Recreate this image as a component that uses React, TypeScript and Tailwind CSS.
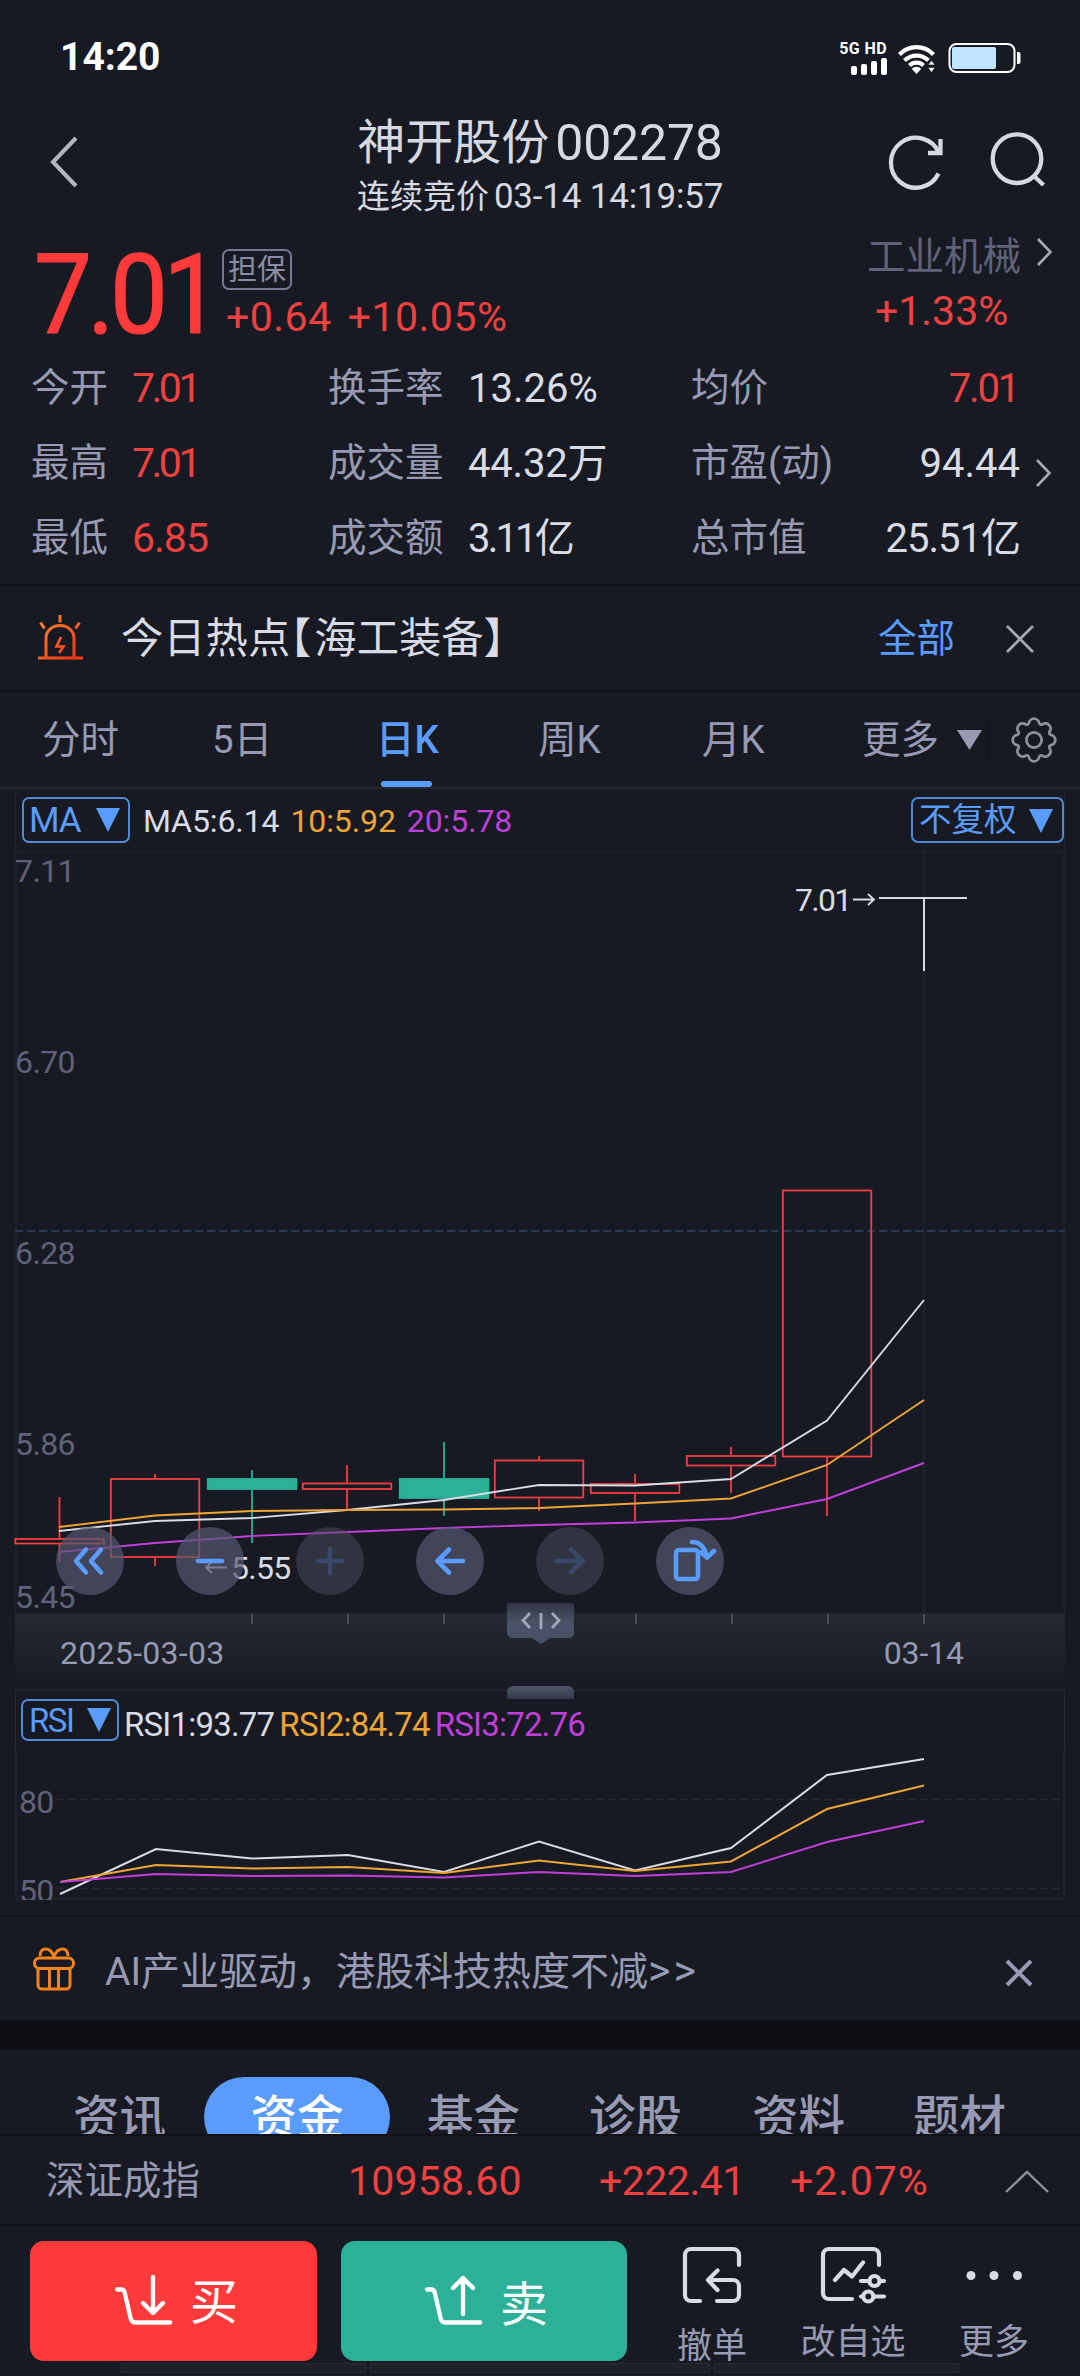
import React from 'react';

type Candle = { x: number; top: number; bottom: number; high: number; low: number; up: boolean };

const CANDLES: Candle[] = [
    { x: 59.5, top: 1540, bottom: 1544.5, high: 1498, low: 1563, up: true },
    { x: 155, top: 1480, bottom: 1558, high: 1475, low: 1567, up: true },
    { x: 252, top: 1480, bottom: 1490, high: 1471, low: 1544, up: false },
    { x: 347, top: 1484.5, bottom: 1490, high: 1466, low: 1511, up: true },
    { x: 444, top: 1480, bottom: 1499, high: 1443, low: 1517, up: false },
    { x: 539, top: 1461.5, bottom: 1498.5, high: 1457, low: 1512, up: true },
    { x: 635, top: 1485, bottom: 1494, high: 1475, low: 1522, up: true },
    { x: 731, top: 1457, bottom: 1466.5, high: 1448, low: 1494, up: true },
    { x: 827, top: 1191.5, bottom: 1457.5, high: 1191.5, low: 1517, up: true },
];

const MA_LINES = [
    { color: '#c03fd8', points: '59,1553 155,1544 252,1537 347,1533 444,1529 539,1526 635,1523.5 731,1519.5 827,1500 924,1464' },
    { color: '#d9dbe5', points: '59,1532 155,1522 252,1519 347,1511 444,1501 539,1486 635,1486.5 731,1480 827,1421.5 924,1301' },
    { color: '#efa534', points: '59,1528 155,1516.5 252,1512 347,1511 444,1510.5 539,1509 635,1504.5 731,1499.5 827,1466 924,1401' },
];

const RSI_LINES = [
    { color: '#d9dbe5', points: '60,1895 156,1850 252,1859.5 348,1856 444,1873 539,1842.5 635,1871.5 731,1849 827,1776 924,1760' },
    { color: '#efa534', points: '60,1883 156,1866 252,1869.5 348,1868 444,1874 539,1861.5 635,1872 731,1862.5 827,1810 924,1786.5' },
    { color: '#c03fd8', points: '60,1883 156,1875 252,1877 348,1876.5 444,1878.5 539,1873 635,1877 731,1873 827,1843 924,1822' },
];

const PRICE_LABELS = [
    { text: '7.11', y: 883 },
    { text: '6.70', y: 1073.5 },
    { text: '6.28', y: 1265 },
    { text: '5.86', y: 1455.5 },
    { text: '5.45', y: 1609 },
];

// eight round teeth joined by small hollows
const polar = (deg: number) => {
    const a = (deg * Math.PI) / 180;
    return `${(17.6 * Math.cos(a)).toFixed(2)} ${(17.6 * Math.sin(a)).toFixed(2)}`;
};
const GEAR_PATH =
    `M${polar(-17)}` +
    [0, 45, 90, 135, 180, 225, 270, 315].map((t) => `A5.200 5.200 0 0 1 ${polar(t + 17)}A2.200 2.200 0 0 0 ${polar(t + 28)}`).join('') +
    'Z';

function StatusBar() {
    return (
        <div className="flex h-[115px] items-center pl-[60px]">
            <span className="w-[778px] text-[39px] font-bold text-white">14:20</span>
            <div className="flex w-[49px] flex-col items-end">
                <span className="whitespace-nowrap text-[16px] leading-[16px] font-bold tracking-[0.4px] text-white">5G HD</span>
                <div className="flex h-[18px] items-end gap-[4px] pt-[1px]">
                    <i className="h-[9px] w-[6px] rounded-[2px] bg-white" />
                    <i className="h-[11px] w-[6px] rounded-[2px] bg-white" />
                    <i className="h-[14px] w-[6px] rounded-[2px] bg-white" />
                    <i className="h-[17px] w-[6px] rounded-[2px] bg-white" />
                </div>
            </div>
            <svg className="ml-[10px]" width="40" height="32" viewBox="0 0 40 32" fill="none" stroke="#fff" strokeWidth="4.2">
                <path d="M2.5 12.5a23.5 23.5 0 0 1 34 0" />
                <path d="M7.5 18.5a17 17 0 0 1 24 0" />
                <path d="M12.5 23.5a10 10 0 0 1 14 0" />
                <path d="M14.8 27a6 6 0 0 1 9.400 0l-4.700 5z" fill="#fff" stroke="none" />
                <path d="M31 23l3.500-4.500L38 23zM31 25.500l3.500 5 3.500-5z" fill="#fff" stroke="#171a22" strokeWidth="0.6" />
            </svg>
            <svg className="ml-[11px]" width="74" height="32" viewBox="0 0 74 32">
                <rect x="1.5" y="2" width="65" height="28" rx="7" fill="none" stroke="#fff" strokeWidth="2" />
                <rect x="4" y="5" width="44" height="22" rx="2" fill="#c2e4ff" />
                <path d="M69 10h1.500a2 2 0 0 1 2 2v8a2 2 0 0 1-2 2H69z" fill="#fff" />
            </svg>
        </div>
    );
}

function Header() {
    return (
        <header className="flex h-[110px] items-start text-[#d6d8e2]">
            <svg className="mt-[21px] ml-[48px]" width="32" height="52" viewBox="0 0 32 52" fill="none" stroke="#b4b6bf" strokeWidth="4">
                <path d="M28 2L5 26l23 24" />
            </svg>
            <div className="ml-[220px] flex w-[480px] flex-col items-center whitespace-nowrap">
                <h1 className="mt-[4px] flex h-[48px] items-center gap-[6px] leading-none">
                    <span className="text-[48px]">神开股份</span>
                    <span className="text-[50px] tracking-[-0.2px]">002278</span>
                </h1>
                <p className="mt-[11px] flex h-[36px] items-center gap-[5px] leading-none">
                    <span className="text-[33px]">连续竞价</span>
                    <span className="text-[35px] tracking-[-0.2px]">03-14 14:19:57</span>
                </p>
            </div>
            <svg className="mt-[15px] ml-[102px]" width="68" height="64" viewBox="882 130 68 64" fill="none" stroke="#d6d8e2" strokeWidth="4.300">
                <path d="M938.500 173.500A25 25 0 1 1 939 153" />
                <path d="M928 153h12.500v-14" />
            </svg>
            <svg className="mt-[15px] ml-[34px]" width="68" height="64" viewBox="984 130 68 64" fill="none" stroke="#d6d8e2" strokeWidth="4.300">
                <circle cx="1017" cy="158.700" r="24.300" />
                <path d="M1034.500 176.500l9 8.500" />
            </svg>
        </header>
    );
}

function Chevron() {
    return (
        <svg width="16" height="28" viewBox="0 0 16 28" fill="none" stroke="#a5a7b3" strokeWidth="2.6">
            <path d="M1 1l12.500 13L1 27" />
        </svg>
    );
}

type Cell = { label: string; value: string; className: string };

function QuoteRow({ cells }: { cells: Cell[] }) {
    const [a, b, c] = cells;
    return (
        <div className="flex h-[75px] items-center pt-[2px] whitespace-nowrap text-[38.5px] leading-none text-[#989ab3]">
            <span className="w-[101px]">{a.label}</span>
            <span className={`w-[196px] text-[41px] ${a.className}`}>{a.value}</span>
            <span className="w-[140px]">{b.label}</span>
            <span className={`w-[223px] text-[40px] ${b.className}`}>{b.value}</span>
            <span className="w-[158px]">{c.label}</span>
            <span className={`w-[171px] text-right text-[40px] ${c.className}`}>{c.value}</span>
        </div>
    );
}

const QUOTE_ROWS: Cell[][] = [
    [
        { label: '今开', value: '7.01', className: 'tracking-[-3.500px] text-[#f04040]' },
        { label: '换手率', value: '13.26%', className: 'text-[#d9dbe5]' },
        { label: '均价', value: '7.01', className: 'pr-[2px] tracking-[-2.200px] text-[#f04040]' },
    ],
    [
        { label: '最高', value: '7.01', className: 'tracking-[-3.500px] text-[#f04040]' },
        { label: '成交量', value: '44.32万', className: 'tracking-[-0.200px] text-[#d9dbe5]' },
        { label: '市盈(动)', value: '94.44', className: 'text-[#d9dbe5]' },
    ],
    [
        { label: '最低', value: '6.85', className: 'tracking-[-1px] text-[#f04040]' },
        { label: '成交额', value: '3.11亿', className: 'tracking-[-2.800px] text-[#d9dbe5]' },
        { label: '总市值', value: '25.51亿', className: 'tracking-[-1px] text-[#d9dbe5]' },
    ],
];

function Quote() {
    return (
        <section className="h-[361px] border-b-2 border-[#101218] pl-[31px]">
            <div className="flex h-[125px] leading-none whitespace-nowrap">
                <span className="mt-[14px] ml-[3px] w-[188px] origin-left scale-x-[0.92] text-[112px] tracking-[-5px] text-[#ff3a3a] [-webkit-text-stroke:1.200px_#ff3a3a]">7.01</span>
                <div className="w-[500px]">
                    <span className="mt-[24px] flex h-[41px] w-[70px] items-center justify-center rounded-[7px] border-2 border-[#767891] pt-[2px] text-[29px] text-[#8b8da6]">担保</span>
                    <div className="mt-[7px] ml-[4px] flex gap-[16px] text-[41px] tracking-[0.500px] text-[#f04040]">
                        <span>+0.64</span>
                        <span>+10.05%</span>
                    </div>
                </div>
                <div className="ml-[145px] w-[170px]">
                    <p className="mt-[13px] text-[38.5px] text-[#606279]">工业机械</p>
                    <p className="mt-[14px] ml-[8px] text-[41px] text-[#f04040]">+1.33%</p>
                </div>
                <div className="mt-[13px]">
                    <Chevron />
                </div>
            </div>
            <div className="flex items-center">
                <div>
                    {QUOTE_ROWS.map((cells) => (
                        <QuoteRow key={cells[0].label} cells={cells} />
                    ))}
                </div>
                <div className="mt-[20px] ml-[16px]">
                    <Chevron />
                </div>
            </div>
        </section>
    );
}

function HotBar() {
    return (
        <section className="flex h-[106px] items-center border-b-2 border-[#101218] leading-none whitespace-nowrap">
            <svg className="ml-[36px]" width="48" height="50" viewBox="36 612 48 50" fill="none" stroke="url(#siren)" strokeWidth="3">
                <defs>
                    <linearGradient id="siren" gradientUnits="userSpaceOnUse" x1="36" y1="614" x2="84" y2="662">
                        <stop offset="0.2" stopColor="#ff7a2b" />
                        <stop offset="0.8" stopColor="#fb3a16" />
                    </linearGradient>
                </defs>
                <path d="M46 656v-19a14 12.500 0 0 1 28 0v19M38 657h45M60 614v7.500M40.500 621.500l4 6M79.500 621.500l-4 6" />
                <path d="M61 636l-4.500 9.500h7L59 652" strokeWidth="2.600" />
            </svg>
            <p className="mt-[3px] ml-[37px] w-[757px] text-[42.300px] text-[#d9dbe5] [font-feature-settings:'halt']">
                今日热点<span className="mr-[3px]">【</span>海工装备】
            </p>
            <span className="mt-[3px] w-[126px] text-[38.500px] text-[#5a9cfb]">全部</span>
            <svg className="mt-[2px]" width="32" height="32" viewBox="0 0 32 32" stroke="#a5a7b3" strokeWidth="2.800">
                <path d="M3 3l26 26M29 3L3 29" />
            </svg>
        </section>
    );
}

function PeriodTabs() {
    return (
        <nav className="flex h-[97px] border-b-2 border-[#262932] text-[38.500px] leading-[95px] whitespace-nowrap text-[#989ab3]">
            <span className="ml-[42px] w-[170px]">分时</span>
            <span className="w-[164px]">5日</span>
            <span className="relative w-[162px] font-medium text-[#5a9cfb]">
                日K
                <i className="absolute bottom-0 left-[5px] h-[6px] w-[51px] rounded-[3px] bg-[#5a9cfb]" />
            </span>
            <span className="w-[164px]">周K</span>
            <span className="w-[160px]">月K</span>
            <span className="w-[95px]">更多</span>
            <svg className="mt-[38px]" width="25" height="20" viewBox="0 0 25 20" fill="#989ab3">
                <path d="M0 0h25L12.500 20z" />
            </svg>
            <i className="mt-[27px] ml-[5px] h-[44px] w-[2px] bg-[#12141a]" />
            <svg className="mt-[22px] ml-[19px]" width="52" height="52" viewBox="-26 -26 52 52" fill="none" stroke="#8d909e" strokeWidth="2.800">
                <path d={GEAR_PATH} />
                <circle r="7.600" />
            </svg>
        </nav>
    );
}

function PickerButton({ label, className }: { label: string; className: string }) {
    return (
        <button className={`flex items-center justify-between rounded-[7px] border-2 border-[#5288d8] text-[#5a9cfb] ${className}`}>
            {label}
            <svg width="24" height="24" viewBox="0 0 24 24" fill="#5a9cfb">
                <path d="M0 0h24L12 24z" />
            </svg>
        </button>
    );
}

function MaBar() {
    return (
        <div className="mx-[15px] flex h-[62px] items-start border-x border-[#20232c] text-[32px] leading-none whitespace-nowrap">
            <PickerButton label="MA" className="mt-[8px] ml-[6px] h-[46px] w-[108px] pr-[8px] pl-[5px] text-[35px] tracking-[-1px]" />
            <div className="mt-[16px] ml-[13px] flex w-[768px] gap-[11px] tracking-[-0.100px]">
                <span className="text-[#d9dbe5]">MA5:6.14</span>
                <span className="text-[#efa534]">10:5.92</span>
                <span className="text-[#c03fd8]">20:5.78</span>
            </div>
            <PickerButton label="不复权" className="mt-[8px] h-[46px] w-[153px] pt-[1px] pr-[9px] pl-[6px] text-[32.500px]" />
        </div>
    );
}

function RoundButton({ dim, children }: { dim?: boolean; children: React.ReactNode }) {
    return (
        <button className={`size-[68px] rounded-full ${dim ? 'bg-[#4a4d60]/50' : 'bg-[#555970]/70'}`}>
            <svg width="68" height="68" viewBox="0 0 68 68" fill="none" stroke={dim ? '#3a4968' : '#5a9cfb'} strokeWidth="4.600" strokeLinecap="round" strokeLinejoin="round">
                {children}
            </svg>
        </button>
    );
}

function KLineChart() {
    return (
        <div className="relative h-[763px]">
            <svg className="block" width="1080" height="763" viewBox="0 852 1080 763" fill="none">
                <path d="M15 852.500H1065M924 852V1614M1064 852V1614M16 852V1614M15 1614H1065" stroke="#1e212b" strokeWidth="2" />
                <path d="M15 1232H1065" stroke="#2b3852" strokeWidth="2" strokeDasharray="8 4" />
                {PRICE_LABELS.map((l) => (
                    <text key={l.y} x="15" y={l.y} fontSize="32" letterSpacing="-0.600" fill="#606279">{l.text}</text>
                ))}
                {CANDLES.map((c) => (
                    <g key={c.x} stroke={c.up ? '#f23f3f' : '#2cb097'} strokeWidth="1.800">
                        <path d={c.up ? `M${c.x} ${c.high}V${c.top}M${c.x} ${c.bottom}V${c.low}` : `M${c.x} ${c.high}V${c.low}`} />
                        <rect x={c.x - 44.2} y={c.top} width="88.500" height={c.bottom - c.top} fill={c.up ? 'none' : '#2cb097'} />
                    </g>
                ))}
                {MA_LINES.map((l) => (
                    <polyline key={l.color} points={l.points} stroke={l.color} strokeWidth="1.900" />
                ))}
                <path d="M879 899H967M924 899V972" stroke="#d9dbe5" strokeWidth="2" />
                <path d="M853 900.500H873M868 895l6 5.500-6 5.500" stroke="#d9dbe5" strokeWidth="1.800" />
                <text x="795" y="912" fontSize="32" letterSpacing="-1.700" fill="#d9dbe5">7.01</text>
                <path d="M227 1568.500H207M212 1563l-6 5.500 6 5.500" stroke="#d9dbe5" strokeWidth="1.800" />
                <text x="231" y="1580" fontSize="32" letterSpacing="-0.700" fill="#d9dbe5">5.55</text>
            </svg>
            {/* floating chart controls */}
            <div className="absolute top-[676px] left-[56px] flex gap-[52px]">
                <RoundButton><path d="M30 22.500L20 34l10 11.500M45 22.500L35 34l10 11.500" /></RoundButton>
                <RoundButton><path d="M22 34h24" /></RoundButton>
                <RoundButton dim><path d="M22 34h24M34 22v24" /></RoundButton>
                <RoundButton><path d="M22 34h25M33 22.500L21.500 34 33 45.500" /></RoundButton>
                <RoundButton dim><path d="M20 34h27M35 22.500L46.500 34 35 45.500" /></RoundButton>
                <RoundButton>
                    <rect x="20" y="23" width="22" height="29" rx="3" />
                    <path d="M36 15c8 0 13 6 15 15M58 24l-7 6.500-6-5" />
                </RoundButton>
            </div>
        </div>
    );
}

function DateAxis() {
    return (
        <div className="relative mx-[15px] h-[76px] bg-gradient-to-b from-[#252932] to-[#171a22] text-[32px] leading-none text-[#989ab3]">
            <svg className="block" width="1050" height="10" viewBox="15 1615 1050 10" stroke="#4a4d5c" strokeWidth="2">
                <path d="M252 1615v10M348 1615v10M444 1615v10M636 1615v10M732 1615v10M828 1615v10M924 1615v10" />
            </svg>
            <div className="mt-[13px] flex justify-between pr-[101px] pl-[45px]">
                <span className="tracking-[0.300px]">2025-03-03</span>
                <span className="tracking-[-0.100px]">03-14</span>
            </div>
            <svg className="absolute -top-[12px] left-[491px]" width="70" height="42" viewBox="506 1603 70 42" fill="none">
                <path d="M507 1604h67v30a5 5 0 0 1-5 5h-19l-9 6-9-6h-20a5 5 0 0 1-5-5z" fill="url(#grip)" />
                <path d="M530 1614l-7 7.500 7 7.500M552 1614l7 7.500-7 7.500M541 1614v16" stroke="#a3a6b8" strokeWidth="2.800" />
                <defs>
                    <linearGradient id="grip" x1="0" y1="0" x2="0" y2="1">
                        <stop offset="0" stopColor="#2f3545" />
                        <stop offset="0.45" stopColor="#4a5266" />
                        <stop offset="1" stopColor="#475066" />
                    </linearGradient>
                </defs>
            </svg>
            <i className="absolute top-[72px] left-[492px] h-[13px] w-[67px] rounded-t-[6px] bg-gradient-to-b from-[#4d556a] to-[#333a4b]" />
        </div>
    );
}

function RsiPanel() {
    return (
        <section className="h-[227px] border-b-2 border-[#101218]">
            <div className="mx-[15px] flex h-[61px] items-start border-x border-t border-[#262932] text-[33px] leading-none whitespace-nowrap">
                <PickerButton label="RSI" className="mt-[8px] ml-[5px] h-[42px] w-[98px] pr-[6px] pl-[6px] text-[33px] tracking-[-1.500px]" />
                <div className="mt-[17px] ml-[5px] flex gap-[5px] tracking-[-0.800px]">
                    <span className="text-[#d9dbe5]">RSI1:93.77</span>
                    <span className="text-[#efa534]">RSI2:84.74</span>
                    <span className="text-[#c03fd8]">RSI3:72.76</span>
                </div>
            </div>
            <svg className="block" width="1080" height="149" viewBox="0 1752 1080 149" fill="none">
                <path d="M16 1752V1900H1064V1752" stroke="#20232d" strokeWidth="2" />
                <path d="M56 1800.500H1064M56 1889.500H1064" stroke="#262936" strokeWidth="1.500" strokeDasharray="8 4" />
                <text x="19" y="1813.500" fontSize="32" letterSpacing="-0.800" fill="#606279">80</text>
                <text x="19" y="1902.500" fontSize="32" letterSpacing="-0.800" fill="#606279">50</text>
                {RSI_LINES.map((l) => (
                    <polyline key={l.color} points={l.points} stroke={l.color} strokeWidth="2" />
                ))}
            </svg>
        </section>
    );
}

function Banner() {
    return (
        <section className="flex h-[103px] items-center leading-none whitespace-nowrap text-[#989ab3]">
            <svg className="ml-[32px]" width="44" height="46" viewBox="32 1946 44 46" fill="none" stroke="#f5831c" strokeWidth="3">
                <rect x="34.500" y="1958" width="39" height="10.500" rx="5" />
                <path d="M38 1969v16a4 4 0 0 0 4 4h24a4 4 0 0 0 4-4v-16M49.500 1969v20M58.500 1969v20" />
                <path d="M54 1957c-3-10-14-11-14-1M54 1957c3-10 14-11 14-1" />
            </svg>
            <p className="mt-[3px] ml-[29px] w-[899px] text-[39px]">
                AI产业驱动，港股科技热度不减<span className="text-[43px] tracking-[3px]">&gt;&gt;</span>
            </p>
            <svg className="mt-[9px]" width="30" height="30" viewBox="0 0 30 30" stroke="#989ab3" strokeWidth="4">
                <path d="M3 3l24 24M27 3L3 27" />
            </svg>
        </section>
    );
}

function InfoTabs() {
    return (
        <nav className="flex h-[84px] items-start overflow-hidden pt-[27px] text-[46.500px] leading-[82px] font-medium whitespace-nowrap text-[#989ab3]">
            <span className="ml-[73px] w-[131px]">资讯</span>
            <span className="h-[80px] w-[186px] shrink-0 rounded-full bg-[#5a9cfb] text-center text-white">资金</span>
            <span className="ml-[37px] w-[162px]">基金</span>
            <span className="w-[163px]">诊股</span>
            <span className="w-[161px]">资料</span>
            <span>题材</span>
        </nav>
    );
}

function IndexBar() {
    return (
        <div className="flex h-[92px] items-center border-y-2 border-[#101218] pt-[3px] text-[41px] leading-none whitespace-nowrap text-[#f04040]">
            <span className="ml-[46px] w-[302px] text-[38.500px] text-[#989ab3]">深证成指</span>
            <span className="w-[251px] tracking-[0.200px]">10958.60</span>
            <span className="w-[191px] tracking-[-0.500px]">+222.41</span>
            <span className="w-[215px] tracking-[0.900px]">+2.07%</span>
            <svg width="44" height="24" viewBox="0 0 44 24" fill="none" stroke="#8f919c" strokeWidth="2.400">
                <path d="M1 22L22 2l21 20" />
            </svg>
        </div>
    );
}

function TradeBar() {
    return (
        <footer className="h-[149px] leading-none whitespace-nowrap">
            <div className="flex h-[137px] items-start pt-[15px] pl-[30px]">
                <button className="flex h-[120px] w-[287px] items-center rounded-[14px] bg-[#ff3a3a] pl-[84px] text-[48px] text-white">
                    <svg width="60" height="54" viewBox="0 0 60 54" fill="none" stroke="#fff" strokeWidth="4.300" strokeLinecap="round" strokeLinejoin="round">
                        <path d="M3 15.500h4.500c2 0 2.700 1 3.200 3l6 26c.6 2.500 2 4 4.500 4h35M39 3v36M29 29l10 10 10-10" />
                    </svg>
                    <span className="mt-[3px] ml-[16px]">买</span>
                </button>
                <button className="ml-[24px] flex h-[120px] w-[286px] items-center rounded-[14px] bg-[#2cb097] pl-[83px] text-[48px] text-white">
                    <svg width="60" height="54" viewBox="0 0 60 54" fill="none" stroke="#fff" strokeWidth="4.300" strokeLinecap="round" strokeLinejoin="round">
                        <path d="M3 15.500h4.500c2 0 2.700 1 3.200 3l6 26c.6 2.500 2 4 4.500 4h35M39 40V4M29 14L39 4l10 10" />
                    </svg>
                    <span className="mt-[7px] ml-[16px]">卖</span>
                </button>
                <div className="ml-[46px] flex w-[78px] flex-col items-center text-[35px] text-[#989ab3]">
                    <svg className="mt-[4px]" width="64" height="62" viewBox="680 2246 64 62" fill="none" stroke="#d9dbe5" strokeWidth="4.200" strokeLinecap="round" strokeLinejoin="round">
                        <path d="M739 2266v-10a6 6 0 0 0-6-6h-42a6 6 0 0 0-6 6v40a6 6 0 0 0 6 6h9M717 2302h16a6 6 0 0 0 6-6v-9a6 6 0 0 0-6-6h-25M717.500 2271.500L708 2281l9.500 10" />
                    </svg>
                    <span className="mt-[22px]">撤单</span>
                </div>
                <div className="ml-[46px] flex w-[112px] flex-col items-center text-[35px] text-[#989ab3]">
                    <svg className="mt-[4px]" width="68" height="62" viewBox="819 2246 68 62" fill="none" stroke="#d9dbe5" strokeWidth="4.200" strokeLinecap="round" strokeLinejoin="round">
                        <path d="M879 2266v-10a6 6 0 0 0-6-6h-44a6 6 0 0 0-6 6v38a6 6 0 0 0 6 6h23M835 2281l9-10 8 6.500L863 2263.500" />
                        <path d="M861 2282h8M880 2282h4M861 2297.500h2M874 2297.500h10" />
                        <circle cx="874.500" cy="2282" r="5" />
                        <circle cx="868.300" cy="2297.500" r="5" />
                    </svg>
                    <span className="mt-[18px]">改自选</span>
                </div>
                <div className="ml-[46px] flex w-[78px] flex-col items-center text-[35px] text-[#989ab3]">
                    <svg className="mt-[4px]" width="64" height="62" viewBox="961 2246 64 62" fill="#d9dbe5">
                        <circle cx="970" cy="2276.500" r="4.500" />
                        <circle cx="993" cy="2276.500" r="4.500" />
                        <circle cx="1016.500" cy="2276.500" r="4.500" />
                    </svg>
                    <span className="mt-[18px]">更多</span>
                </div>
            </div>
            <div className="mx-[119px] flex h-[10px] gap-[4px]">
                <i className="w-[247px] rounded-l-full border border-[#292c35] bg-[#1f2129]" />
                <i className="w-[340px] border border-[#292c35] bg-[#1f2129]" />
                <i className="w-[247px] rounded-r-full border border-[#292c35] bg-[#1f2129]" />
            </div>
        </footer>
    );
}

export default function App() {
    return (
        <main className="h-[2376px] w-[1080px] overflow-hidden bg-[#171a22] font-['Roboto','Noto_Sans_CJK_SC',sans-serif]">
            <StatusBar />
            <Header />
            <Quote />
            <HotBar />
            <PeriodTabs />
            <MaBar />
            <KLineChart />
            <DateAxis />
            <RsiPanel />
            <Banner />
            <div className="h-[30px] bg-[#0d0f14]" />
            <InfoTabs />
            <IndexBar />
            <TradeBar />
        </main>
    );
}
